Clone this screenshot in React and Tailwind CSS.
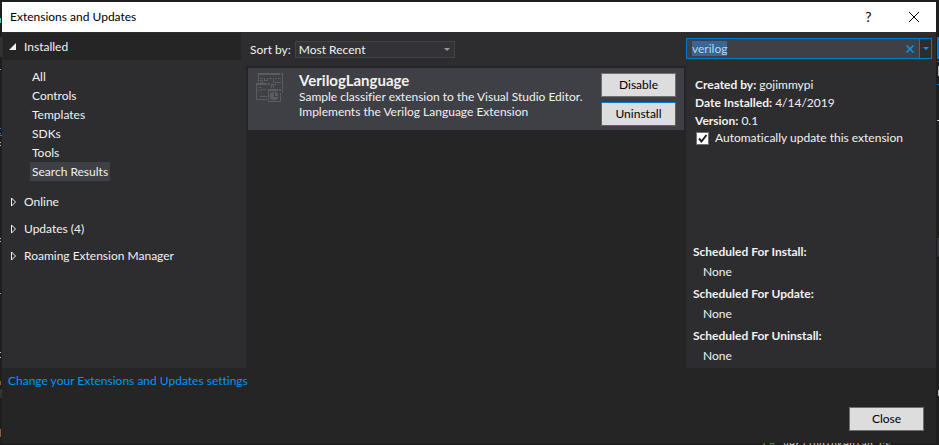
import { useState } from "react";

const installed = ["All", "Controls", "Templates", "SDKs", "Tools", "Search Results"];
const collapsed = ["Online", "Updates (4)", "Roaming Extension Manager"];
const scheduled = ["Install", "Update", "Uninstall"];

function ExtensionIcon() {
  return (
    <svg width="28" height="30" viewBox="0 0 28 30" fill="none" stroke="#5b5b60" shapeRendering="crispEdges" aria-hidden="true">
      <path d="M2.500 9V1M26.500 1V20M.5 11V27M0 26.500H11" />
      <path d="M2 1H24M25 1H27M0 11H11M12 11H14M12 17H22M23 17H25" strokeWidth="2" />
      <path d="M12.500 17V29M12 28.500H25M24.500 20V29" />
      <path d="M4 5.500H7M4 7.500H7M4 9.500H7M8.500 5V8M8 7.500H12M11.500 5V8M13 5.500H16M17.500 5V10M19 5.500H21M22 5.500H25M19 9.500H25M16 11.500H20M15.500 11V15M17.500 12V15M3 14.500H5M2 17.500H4M5.500 16V18M7 16.500H10M4 23.500H11" />
      <circle cx="18" cy="23" r="4" fill="#5b5b60" shapeRendering="auto" />
      <path d="M18.500 19V23H22" stroke="#3f3f46" />
    </svg>
  );
}

function PushButton({ children, focused = false }) {
  return (
    <button
      type="button"
      className={`flex h-6 w-[75px] items-center justify-center border bg-[#dddddd] text-black ${focused ? "border-[#007acc]" : "border-[#707070]"}`}
    >
      {children}
    </button>
  );
}

function Sidebar() {
  return (
    <nav className="w-[244px] shrink-0 text-[#f1f1f1]">
      <button type="button" className="mx-px mt-px flex h-[27px] w-[238px] items-center gap-2 bg-[#252526] pl-1.5">
        <svg width="7" height="7" viewBox="0 0 7 7" fill="#f1f1f1" aria-hidden="true">
          <path d="M7 0V7H0Z" />
        </svg>
        Installed
      </button>
      <ul className="pt-[7px] pl-7">
        {installed.map((name) => (
          <li key={name}>
            <button
              type="button"
              className={`block h-[19px] px-0.5 leading-[19px] ${name === "Search Results" ? "bg-[#3f3f46]" : ""}`}
            >
              {name}
            </button>
          </li>
        ))}
      </ul>
      <ul className="pt-[7px]">
        {collapsed.map((name) => (
          <li key={name}>
            <button type="button" className="flex h-[27px] items-center gap-2 pl-2">
              <svg width="6" height="10" viewBox="0 0 6 10" fill="none" stroke="#f1f1f1" aria-hidden="true">
                <path d="M1.500 1V9L5.500 5Z" />
              </svg>
              {name}
            </button>
          </li>
        ))}
      </ul>
    </nav>
  );
}

function ExtensionList() {
  return (
    <main className="flex min-w-0 flex-1 flex-col text-[#f1f1f1]">
      <div className="flex h-[34px] items-center gap-1 pl-1">
        <label htmlFor="sort" className="pt-0.5">Sort by:</label>
        <div className="grid h-[17px] w-40 items-center border border-[#434346] bg-[#333337]">
          <select id="sort" className="col-start-1 row-start-1 h-[15px] w-full appearance-none pl-[3px] leading-[15px] outline-none">
            <option>Most Recent</option>
          </select>
          <svg className="pointer-events-none col-start-1 row-start-1 mr-1 justify-self-end" width="6" height="3" viewBox="0 0 6 3" fill="#999999" aria-hidden="true">
            <path d="M0 0H6L3 3Z" />
          </svg>
        </div>
      </div>
      <div className="flex-1 bg-[#252526] p-0.5">
        <article className="flex h-[62px] items-start bg-[#3f3f46] pt-[5px] pr-2 pl-2">
          <ExtensionIcon />
          <div className="min-w-0 flex-1 pl-[15px] leading-[15px]">
            <h2 className="-mt-0.5 text-[15px] leading-[18px] font-bold">VerilogLanguage</h2>
            <p>Sample classifier extension to the Visual Studio Editor.</p>
            <p>Implements the Verilog Language Extension</p>
          </div>
          <div className="flex flex-col gap-[5px]">
            <PushButton>Disable</PushButton>
            <PushButton focused>Uninstall</PushButton>
          </div>
        </article>
      </div>
    </main>
  );
}

function Details() {
  const [query, setQuery] = useState("verilog");
  return (
    <aside className="flex w-[250px] shrink-0 flex-col text-[#f1f1f1]">
      <div className="mt-1.5 mr-1 flex h-[21px] border border-[#007acc] bg-[#3f3f46]">
        <div className="grid flex-1 items-center">
          <span className="col-start-1 row-start-1 ml-[5px] h-[15px] justify-self-start bg-[#3a6595] leading-[15px] text-transparent" aria-hidden="true">{query}</span>
          <input
            aria-label="Search installed extensions"
            value={query}
            onChange={(event) => setQuery(event.target.value)}
            className="z-10 col-start-1 row-start-1 h-[15px] w-full pl-[5px] leading-[15px] text-[#b5d5ee] outline-none"
          />
        </div>
        <button type="button" aria-label="Clear search" className="flex w-[18px] items-center justify-center">
          <svg width="8" height="8" viewBox="0 0 8 8" stroke="#0097fb" strokeWidth="1.500" aria-hidden="true">
            <path d="M.5 .5L7.500 7.500M7.500 .5L.5 7.500" />
          </svg>
        </button>
        <button type="button" aria-label="Search options" className="flex w-3 items-center justify-center border-l border-[#007acc] bg-[#2d2d30]">
          <svg width="6" height="3" viewBox="0 0 6 3" fill="#0097fb" aria-hidden="true">
            <path d="M0 0H6L3 3Z" />
          </svg>
        </button>
      </div>
      <div className="pt-[17px] pl-[9px] leading-[18px]">
        <p><b>Created by:</b> gojimmypi</p>
        <p><b>Date Installed:</b> 4/14/2019</p>
        <p><b>Version:</b> 0.1</p>
        <label className="flex h-4 items-center gap-1.5 pl-px">
          <span className="grid">
            <input type="checkbox" defaultChecked className="peer col-start-1 row-start-1 size-[13px] appearance-none border border-[#707070] bg-white" />
            <svg className="pointer-events-none invisible col-start-1 row-start-1 peer-checked:visible" width="13" height="13" viewBox="0 0 13 13" fill="none" stroke="#212121" strokeWidth="2" aria-hidden="true">
              <path d="M3 6.500L5.500 9.500L10.500 3" />
            </svg>
          </span>
          Automatically update this extension
        </label>
      </div>
      <dl className="mt-auto pl-[7px]">
        {scheduled.map((name) => (
          <div key={name} className="h-[42px]">
            <dt className="h-5 leading-5 font-bold">Scheduled For {name}:</dt>
            <dd className="h-5 pl-2.5 leading-5">None</dd>
          </div>
        ))}
      </dl>
    </aside>
  );
}

// Slivers of the editor window that show around the dialog.
function EditorEdges() {
  return (
    <div aria-hidden="true">
      <svg className="absolute top-0 left-0" width="2" height="445" viewBox="0 0 2 445" shapeRendering="crispEdges">
        <path d="M0 37H2V57H0ZM0 389H2V398H0Z" fill="#333337" />
        <path d="M0 18H1V23H0ZM0 69H1V70H0ZM0 293H1V294H0Z" fill="#4ec9b0" />
        <path d="M0 128H1V129H0ZM0 133H1V134H0ZM0 135H2V136H0Z" fill="#3f78a8" />
        <path d="M0 142H1V143H0ZM0 145H1V146H0ZM0 238H1V239H0ZM0 241H1V242H0ZM0 352H1V353H0ZM0 357H1V358H0Z" fill="#c8c08a" />
        <path d="M0 381H1V385H0ZM0 429H1V437H0Z" fill="#9a5a3a" />
      </svg>
      <svg className="absolute top-0 right-0" width="2" height="445" viewBox="0 0 2 445" shapeRendering="crispEdges">
        <path d="M0 37H2V59H0ZM0 61H2V62H0ZM0 84H2V85H0Z" fill="#007acc" />
        <path d="M1 66H2V76H1ZM0 120H2V121H0ZM1 390H2V396H1Z" fill="#b8b8b8" />
        <path d="M0 238H2V257H0Z" fill="#333337" />
      </svg>
      <div className="absolute right-12 bottom-0 flex h-0.5 gap-2 overflow-hidden font-['Liberation_Mono',monospace] text-[10px] leading-[6px] text-[#c8c8c8]">
        <span className="text-[#5fa55a]">C#</span>
        <span>VerilogTokenTag.cs</span>
      </div>
    </div>
  );
}

export default function App() {
  return (
    <div className="relative flex h-screen flex-col bg-[#1e1e1e] pt-0.5 pr-[3px] pb-0.5 pl-0.5 font-[Lato,'Open_Sans',sans-serif] text-xs [font-variant-ligatures:none]">
      <EditorEdges />
      <header className="flex h-[30px] shrink-0 items-center bg-white pl-2 text-black">
        <h1 className="flex-1">Extensions and Updates</h1>
        <button type="button" aria-label="Help" className="h-full w-[45px] text-sm">?</button>
        <button type="button" aria-label="Close window" className="flex h-full w-[45px] items-center justify-center">
          <svg width="10" height="10" viewBox="0 0 10 10" stroke="black" aria-hidden="true">
            <path d="M0 0L10 10M10 0L0 10" />
          </svg>
        </button>
      </header>
      <div className="flex min-h-0 flex-1 bg-[#2d2d30]">
        <Sidebar />
        <ExtensionList />
        <Details />
      </div>
      <footer className="flex h-[75px] shrink-0 items-start justify-between bg-[#252526] pt-1 pr-3 pl-1.5">
        <a href="#settings" className="leading-[18px] text-[#0097fb]">Change your Extensions and Updates settings</a>
        <div className="self-end pb-3"><PushButton>Close</PushButton></div>
      </footer>
    </div>
  );
}
